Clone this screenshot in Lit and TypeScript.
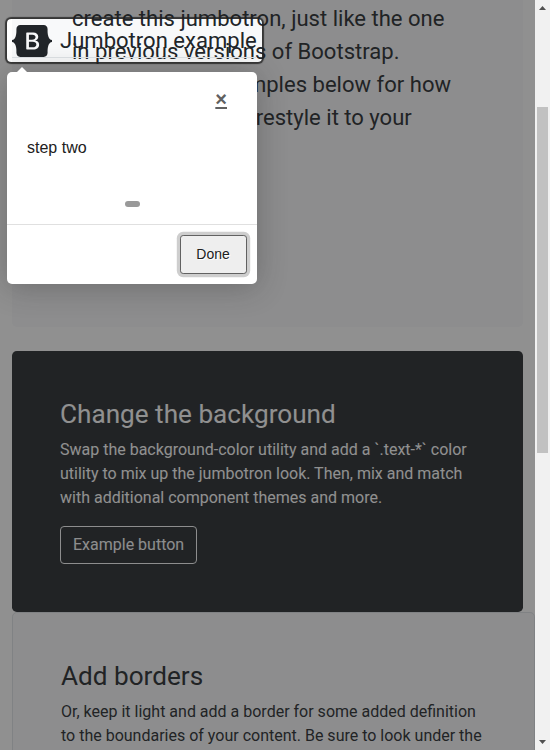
import { LitElement, html, css } from "lit";
import { customElement } from "lit/decorators.js";

@customElement("app-root")
export class AppRoot extends LitElement {
  static styles = css`
    :host {
      display: flex;
      position: relative;
      box-sizing: border-box;
      width: 550px;
      height: 750px;
      overflow: hidden;
      background: #fff;
      color: #212529;
      font: 16px/24px Roboto, sans-serif;
    }
    * { box-sizing: border-box; }
    .page {
      position: relative;
      width: 535px;
      height: 750px;
      overflow: hidden;
      padding: 0 12px;
      flex: none;
    }
    .card { border-radius: 4.8px; padding: 48px; white-space: nowrap; }
    .intro {
      height: 326.6px;
      padding: 2px 60px 0;
      background: #f8f9fa;
      border-radius: 0 0 4.8px 4.8px;
      margin-bottom: 24px;
      font-size: 22.05px;
      line-height: 33.08px;
    }
    .dark { background: #212529; color: #fff; height: 261.4px; }
    .bordered { background: #f8f9fa; border: 1px solid #dee2e6; width: 523px; height: 300px; }
    h2 { margin: 0 0 8px; font-size: 26.15px; line-height: 31.4px; font-weight: 400; }
    p { margin: 0 0 16px; }
    .intro p { margin: 0; }
    .outline {
      display: inline-block;
      height: 38px;
      padding: 6px 12px;
      border: 1px solid #f8f9fa;
      border-radius: 4px;
      background: transparent;
      color: #f8f9fa;
      font: 16px/24px Roboto, sans-serif;
    }
    .spotlight {
      position: absolute;
      left: 7px;
      top: 19px;
      width: 255px;
      height: 43px;
      border-radius: 4px;
      box-shadow: rgba(33, 33, 33, 0.8) 0 0 1px 2px, rgba(33, 33, 33, 0.5) 0 0 0 5000px;
    }
    .brand {
      position: absolute;
      left: 12px;
      top: 24px;
      width: 245px;
      height: 34px;
      display: flex;
      gap: 8px;
      border-bottom: 1px solid #dee2e6;
      font-size: 22.05px;
      line-height: 33px;
      white-space: nowrap;
    }
    .brand svg { margin-top: 1px; flex: none; }
    .tip {
      position: absolute;
      left: 7px;
      top: 72px;
      width: 250px;
      height: 212px;
      background: #fff;
      border-radius: 5px;
      box-shadow: 0 3px 30px rgba(33, 33, 33, 0.3);
      color: #212121;
      font-family: "Liberation Sans", Arial, sans-serif;
      display: flex;
      flex-direction: column;
    }
    .arrow {
      position: absolute;
      left: 10px;
      top: -5px;
      border: 5px solid transparent;
      border-top: 0;
      border-bottom-color: #fff;
    }
    .head { height: 64px; display: flex; justify-content: flex-end; padding: 12px 30px 0 0; }
    .close { font-size: 20px; line-height: 30px; font-weight: 700; color: #616161; text-decoration: underline; }
    .text { padding: 0 20px; height: 65px; }
    .bullets { display: flex; justify-content: center; height: 23px; }
    .bullet { width: 15px; height: 6px; border-radius: 10px; background: #999; }
    .foot { border-top: 1px solid #e0e0e0; padding: 10px; display: flex; justify-content: flex-end; }
    .done {
      width: 67px;
      height: 39px;
      padding: 0 1px 0 0;
      border: 1px solid #616161;
      border-radius: 3.2px;
      background: #eee;
      color: #212121;
      font: 14px/21px "Liberation Sans", Arial, sans-serif;
      text-shadow: 1px 1px 0 #fff;
      box-shadow: 0 0 0 3.2px rgba(158, 158, 158, 0.5);
    }
    .scroll {
      width: 15px;
      height: 750px;
      background: #f1f1f1;
      display: flex;
      flex-direction: column;
      align-items: center;
      flex: none;
    }
    .scroll svg { display: block; flex: none; }
    .track { flex: 1; padding-top: 92px; }
    .thumb { width: 11px; height: 346px; background: #c1c1c1; }
  `;

  render() {
    return html`
      <main class="page">
        <section class="card intro">
          <p>create this jumbotron, just like the one<br />in previous versions of Bootstrap.<br />Check out the examples below for how<br />you can remix and restyle it to your</p>
        </section>
        <section class="card dark">
          <h2>Change the background</h2>
          <p>Swap the background-color utility and add a \`.text-*\` color<br />utility to mix up the jumbotron look. Then, mix and match<br />with additional component themes and more.</p>
          <button class="outline">Example button</button>
        </section>
        <section class="card bordered">
          <h2>Add borders</h2>
          <p>Or, keep it light and add a border for some added definition<br />to the boundaries of your content. Be sure to look under the</p>
        </section>
        <div class="spotlight"></div>
        <div class="brand">
          <svg width="40" height="32" viewBox="0 0 118 94">
            <path fill="#212529" fill-rule="evenodd" clip-rule="evenodd" d="M24.509 0c-6.733 0-11.715 5.893-11.492 12.284.214 6.14-.064 14.092-2.066 20.577C8.943 39.365 5.547 43.485 0 44.014v5.972c5.547.529 8.943 4.649 10.951 11.153 2.002 6.485 2.28 14.437 2.066 20.577C12.794 88.106 17.776 94 24.51 94H93.5c6.733 0 11.714-5.893 11.491-12.284-.214-6.14.064-14.092 2.066-20.577 2.009-6.504 5.396-10.624 10.943-11.153v-5.972c-5.547-.529-8.934-4.649-10.943-11.153-2.002-6.484-2.28-14.437-2.066-20.577C105.214 5.894 100.233 0 93.5 0H24.508zM80 57.863C80 66.663 73.436 72 62.543 72H44a2 2 0 01-2-2V24a2 2 0 012-2h18.437c9.083 0 15.044 4.92 15.044 12.474 0 5.302-4.01 10.049-9.119 10.88v.277C75.317 46.394 80 51.21 80 57.863zM60.521 28.34H49.948v14.934h8.905c6.884 0 10.68-2.772 10.68-7.727 0-4.643-3.264-7.207-9.012-7.207zM49.948 49.2v16.458H60.91c7.167 0 10.964-2.876 10.964-8.281 0-5.406-3.903-8.178-11.425-8.178H49.948z"></path>
          </svg>
          <span>Jumbotron example</span>
        </div>
        <aside class="tip">
          <div class="arrow"></div>
          <div class="head"><span class="close">×</span></div>
          <div class="text">step two</div>
          <div class="bullets"><span class="bullet"></span></div>
          <div class="foot"><button class="done">Done</button></div>
        </aside>
      </main>
      <div class="scroll">
        <svg width="15" height="15"><path d="M4 10h7L7.5 6z" fill="#505050"></path></svg>
        <div class="track"><div class="thumb"></div></div>
        <svg width="15" height="15"><path d="M4 5h7L7.5 9z" fill="#505050"></path></svg>
      </div>
    `;
  }
}
